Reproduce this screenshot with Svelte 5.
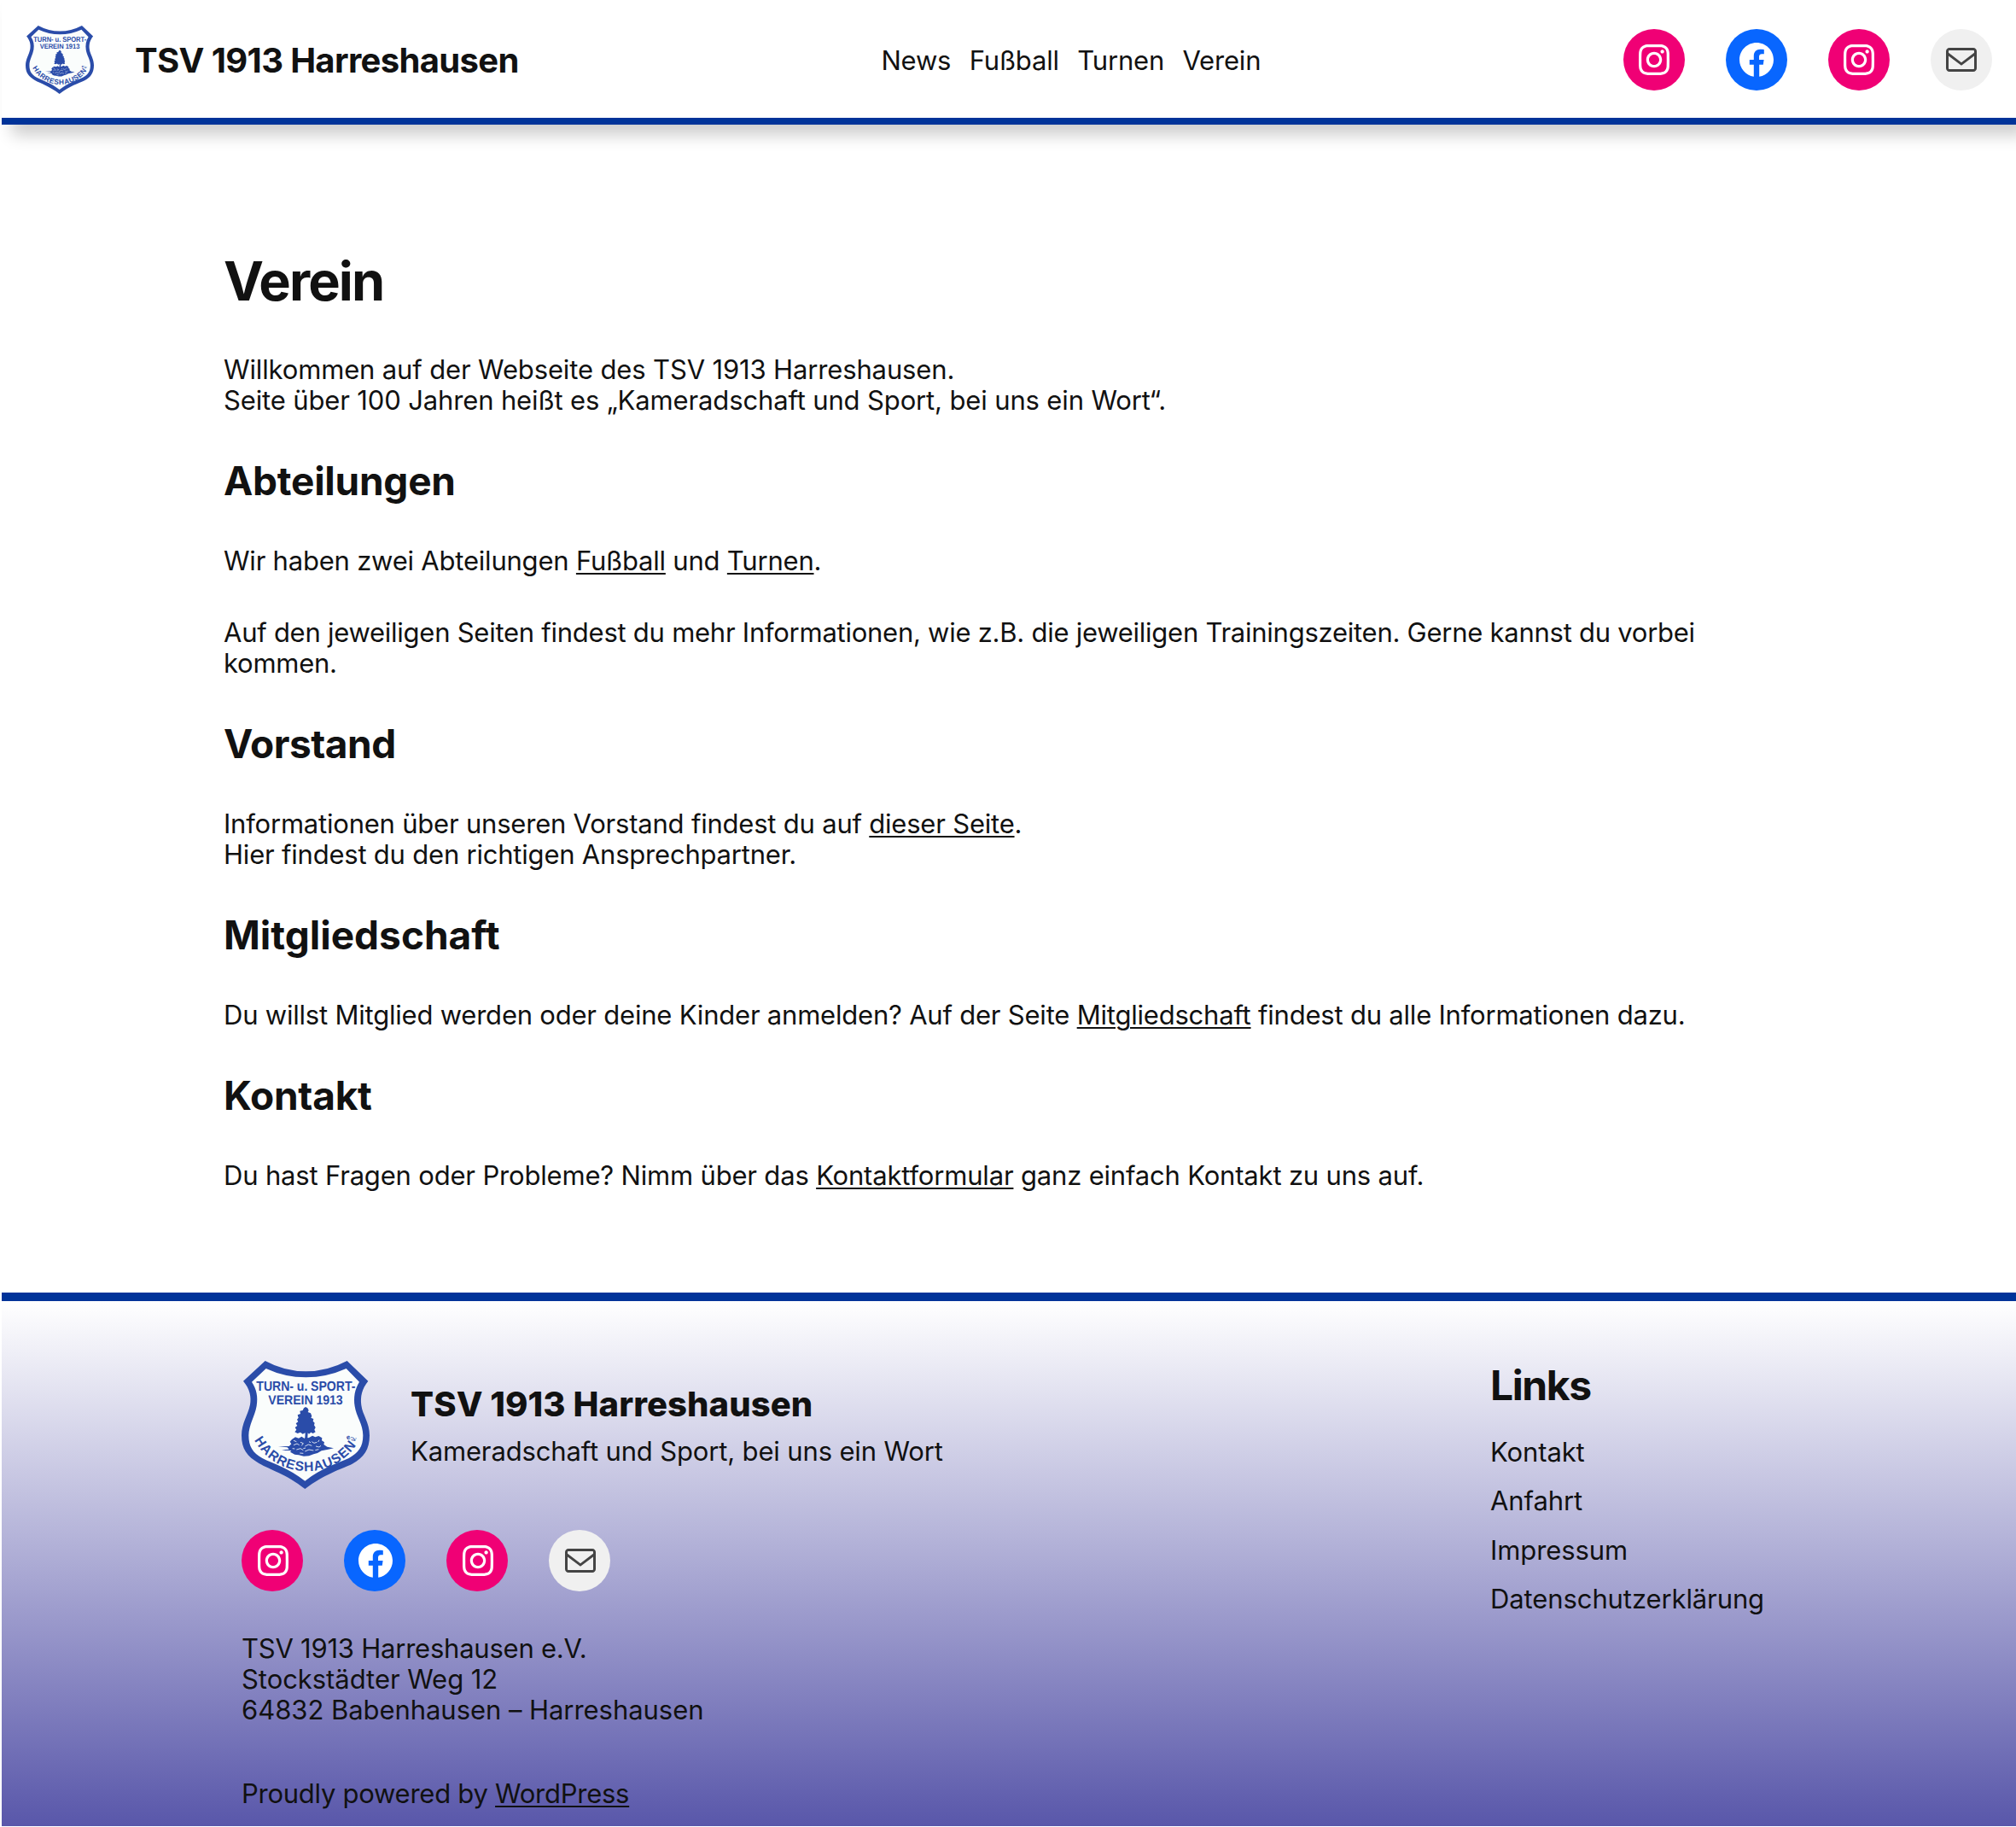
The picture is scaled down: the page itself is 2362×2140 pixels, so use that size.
<script>
  const nav = ['News', 'Fußball', 'Turnen', 'Verein'];
  const footerLinks = ['Kontakt', 'Anfahrt', 'Impressum', 'Datenschutzerklärung'];
  const socials = ['instagram', 'facebook', 'instagram', 'mail'];
</script>

{#snippet logo(id)}
  <svg class="logo" viewBox="39 42 450 450" role="img" aria-label="TSV 1913 Harreshausen">
    <path
      fill="#2a4ca9"
      d="M122 42Q190 79 265 79Q340 79 410 42L484 113C462 140 456 168 460 198C464 232 489 258 489 304C489 352 470 382 428 404C390 422 330 440 262 492C196 440 138 424 100 402C58 378 39 352 39 304C39 262 62 232 69 196C74 168 68 140 45 113Z"
    />
    <path
      fill="#fafdfc"
      d="M125 69Q192 100 265 100Q338 100 407 69L453 116C437 142 432 170 437 202C442 238 466 264 466 304C466 344 450 366 416 384C376 402 322 418 262 464C204 418 150 404 112 384C78 366 64 342 64 304C64 268 86 236 92 200C97 168 92 142 75 116Z"
    />
    <g fill="#2a4ca9" font-family="'Liberation Sans', Arial, sans-serif" font-weight="700" text-rendering="geometricPrecision">
      <text x="91" y="147" font-size="48" textLength="348" lengthAdjust="spacingAndGlyphs">TURN- u. SPORT-</text>
      <text x="133" y="195" font-size="46" textLength="262" lengthAdjust="spacingAndGlyphs">VEREIN 1913</text>
      <path id="arc-{id}" d="M84 320A210 210 0 0 0 447 330" fill="none" />
      <text font-size="47" textLength="428" lengthAdjust="spacing"><textPath href="#arc-{id}">HARRESHAUSEN</textPath></text>
      <text font-size="24" transform="translate(411 320) rotate(-25)">e.</text>
      <text font-size="20" transform="translate(436 328) rotate(-62)">V.</text>
    </g>
    <g fill="#2a4ca9">
      <path
        d="M264 204L271 208L275 216L272 222L282 226L286 236L283 242L292 246L290 254L296 260L294 268L299 276L295 284L299 292L290 297L283 293L276 299L272 295L271 312L277 320L257 320L262 312L263 295L254 299L246 293L236 297L226 292L232 284L227 276L235 270L230 262L238 256L234 248L239 242L236 232L246 228L244 218L254 216L258 208Z"
      />
      <path
        d="M216 318L228 310L240 314L250 308L262 316L276 312L288 305L298 310L310 306L322 313L321 322L330 328L328 336L340 344L363 349L340 354L320 358L306 366L292 370L276 376L258 377L240 373L226 371L210 362L214 357L194 357L180 355L206 353L200 346L168 343L206 342L214 334L209 326Z"
      />
    </g>
    <path
      fill="none"
      stroke="#fafdfc"
      stroke-width="2.5"
      d="M222 338l12-5 8 5M246 328l10 4-6 8M262 342l12-6 12 4M286 326l8 5 10-3M300 342l12 3 6-5M232 354l14-4 10 6M262 360l14-6 16 3M222 322l10 4M298 356l12-3M244 366l12 1M218 350l8 1M276 326l6 3M312 320l-4 7M256 350l8-2"
    />
  </svg>
{/snippet}

{#snippet socialIcons()}
  <div class="socials">
    {#each socials as kind}
      <span class="social {kind}">
        <svg viewBox="0 0 24 24" width="48" height="48" fill="currentColor">
          {#if kind === 'instagram'}
            <path
              d="M12,4.622c2.403,0,2.688,0.009,3.637,0.052c0.877,0.04,1.354,0.187,1.671,0.31c0.42,0.163,0.72,0.358,1.035,0.673c0.315,0.315,0.51,0.615,0.673,1.035c0.123,0.317,0.27,0.794,0.31,1.671c0.043,0.949,0.052,1.234,0.052,3.637s-0.009,2.688-0.052,3.637c-0.04,0.877-0.187,1.354-0.31,1.671c-0.163,0.42-0.358,0.72-0.673,1.035c-0.315,0.315-0.615,0.51-1.035,0.673c-0.317,0.123-0.794,0.27-1.671,0.31c-0.949,0.043-1.233,0.052-3.637,0.052s-2.688-0.009-3.637-0.052c-0.877-0.04-1.354-0.187-1.671-0.31c-0.42-0.163-0.72-0.358-1.035-0.673c-0.315-0.315-0.51-0.615-0.673-1.035c-0.123-0.317-0.27-0.794-0.31-1.671C4.631,14.688,4.622,14.403,4.622,12s0.009-2.688,0.052-3.637c0.04-0.877,0.187-1.354,0.31-1.671c0.163-0.42,0.358-0.72,0.673-1.035c0.315-0.315,0.615-0.51,1.035-0.673c0.317-0.123,0.794-0.27,1.671-0.31C9.312,4.631,9.597,4.622,12,4.622M12,3C9.556,3,9.249,3.01,8.289,3.054C7.331,3.098,6.677,3.25,6.105,3.472C5.513,3.702,5.011,4.01,4.511,4.511c-0.5,0.5-0.808,1.002-1.038,1.594C3.25,6.677,3.098,7.331,3.054,8.289C3.01,9.249,3,9.556,3,12c0,2.444,0.01,2.751,0.054,3.711c0.044,0.958,0.196,1.612,0.418,2.185c0.23,0.592,0.538,1.094,1.038,1.594c0.5,0.5,1.002,0.808,1.594,1.038c0.572,0.222,1.227,0.375,2.185,0.418C9.249,20.99,9.556,21,12,21s2.751-0.01,3.711-0.054c0.958-0.044,1.612-0.196,2.185-0.418c0.592-0.23,1.094-0.538,1.594-1.038c0.5-0.5,0.808-1.002,1.038-1.594c0.222-0.572,0.375-1.227,0.418-2.185C20.99,14.751,21,14.444,21,12s-0.01-2.751-0.054-3.711c-0.044-0.958-0.196-1.612-0.418-2.185c-0.23-0.592-0.538-1.094-1.038-1.594c-0.5-0.5-1.002-0.808-1.594-1.038c-0.572-0.222-1.227-0.375-2.185-0.418C14.751,3.01,14.444,3,12,3L12,3zM12,7.378c-2.552,0-4.622,2.069-4.622,4.622S9.448,16.622,12,16.622s4.622-2.069,4.622-4.622S14.552,7.378,12,7.378zM12,15c-1.657,0-3-1.343-3-3s1.343-3,3-3s3,1.343,3,3S13.657,15,12,15zM16.804,6.116c-0.596,0-1.08,0.484-1.08,1.08s0.484,1.08,1.08,1.08c0.596,0,1.08-0.484,1.08-1.08S17.4,6.116,16.804,6.116z"
            />
          {:else if kind === 'facebook'}
            <path
              d="M12 2C6.5 2 2 6.5 2 12c0 5 3.7 9.1 8.4 9.9v-7H7.9V12h2.5V9.8c0-2.5 1.5-3.9 3.8-3.9 1.1 0 2.2.2 2.2.2v2.5h-1.3c-1.2 0-1.6.8-1.6 1.6V12h2.8l-.4 2.9h-2.3v7C18.3 21.1 22 17 22 12c0-5.5-4.5-10-10-10z"
            />
          {:else}
            <path
              d="M19,5H5c-1.1,0-2,.9-2,2v10c0,1.1.9,2,2,2h14c1.1,0,2-.9,2-2V7c0-1.1-.9-2-2-2zm.5,12c0,.3-.2.5-.5.5H5c-.3,0-.5-.2-.5-.5V9.8l7.5,5.6,7.5-5.6V17zm0-9.1L12,13.6,4.5,7.9V7c0-.3.2-.5.5-.5h14c.3,0,.5.2.5.5v.9z"
            />
          {/if}
        </svg>
      </span>
    {/each}
  </div>
{/snippet}

<div class="page">
  <header>
    <div class="brand">
      {@render logo('top')}
      <span class="site-title">TSV 1913 Harreshausen</span>
    </div>
    <nav>
      {#each nav as item}<span>{item}</span>{/each}
    </nav>
    {@render socialIcons()}
  </header>

  <main>
    <h1>Verein</h1>
    <p class="open">Willkommen auf der Webseite des TSV 1913 Harreshausen.<br />Seite über 100 Jahren heißt es „Kameradschaft und Sport, bei uns ein Wort“.</p>
    <h2>Abteilungen</h2>
    <p>Wir haben zwei Abteilungen <u>Fußball</u> und <u>Turnen</u>.</p>
    <p class="tight">Auf den jeweiligen Seiten findest du mehr Informationen, wie z.B. die jeweiligen Trainingszeiten. Gerne kannst du vorbei<br />kommen.</p>
    <h2 class="narrow">Vorstand</h2>
    <p>Informationen über unseren Vorstand findest du auf <u>dieser Seite</u>.<br />Hier findest du den richtigen Ansprechpartner.</p>
    <h2 class="wide">Mitgliedschaft</h2>
    <p>Du willst Mitglied werden oder deine Kinder anmelden? Auf der Seite <u>Mitgliedschaft</u> findest du alle Informationen dazu.</p>
    <h2>Kontakt</h2>
    <p class="contact">Du hast Fragen oder Probleme? Nimm über das <u>Kontaktformular</u> ganz einfach Kontakt zu uns auf.</p>
  </main>

  <footer>
    <div class="about">
      <div class="brand large">
        {@render logo('bottom')}
        <div class="titles">
          <span class="site-title">TSV 1913 Harreshausen</span>
          <span class="tagline">Kameradschaft und Sport, bei uns ein Wort</span>
        </div>
      </div>
      {@render socialIcons()}
      <address><span class="club">TSV 1913 Harreshausen e.V.</span><br />Stockstädter Weg 12<br />64832 Babenhausen – Harreshausen</address>
      <div class="powered">Proudly powered by <u>WordPress</u></div>
    </div>
    <div class="links">
      <h2>Links</h2>
      <ul>
        {#each footerLinks as item}<li>{item}</li>{/each}
      </ul>
    </div>
  </footer>
</div>

<style>
  :global(body) {
    background: #fff;
  }
  .page {
    margin-left: 2px;
    color: #111;
    font: 400 31px/36px Inter, 'Liberation Sans', sans-serif;
    letter-spacing: -0.21px;
    white-space: nowrap;
  }
  header {
    display: flex;
    align-items: center;
    justify-content: space-between;
    box-sizing: border-box;
    height: 146px;
    padding: 2px 28px 0;
    border-bottom: 8px solid #003399;
    box-shadow: 12px 12px 18px rgba(0, 0, 0, 0.2);
  }
  .brand {
    display: flex;
    align-items: center;
    gap: 48px;
  }
  .logo {
    display: block;
    width: 80px;
    height: 80px;
  }
  .large .logo {
    width: 150px;
    height: 150px;
  }
  .site-title {
    padding-top: 2px;
    font-size: 40px;
    font-weight: 700;
    line-height: 50px;
    letter-spacing: -0.65px;
  }
  nav {
    display: flex;
    gap: 21.4px;
    padding-top: 2px;
    letter-spacing: -0.18px;
  }
  .socials {
    display: flex;
    gap: 48px;
  }
  .social {
    display: flex;
    align-items: center;
    justify-content: center;
    width: 72px;
    height: 72px;
    border-radius: 50%;
    color: #fff;
  }
  .social svg {
    display: block;
  }
  .instagram {
    background: #f00075;
  }
  .facebook {
    background: #0866ff;
  }
  .mail {
    background: #f0f0f0;
    color: #444;
  }
  main {
    display: flex;
    flex-direction: column;
    gap: 48px;
    box-sizing: border-box;
    height: 1368px;
    padding: 146px 260px 0;
  }
  h1,
  h2,
  p,
  ul {
    margin: 0;
    padding: 0;
  }
  h1 {
    margin-bottom: 1px;
    font-size: 63px;
    font-weight: 700;
    line-height: 74px;
    letter-spacing: -1.9px;
  }
  h2 {
    font-size: 46px;
    font-weight: 700;
    line-height: 56px;
    letter-spacing: -0.25px;
  }
  .wide {
    letter-spacing: 0;
  }
  .narrow {
    letter-spacing: -0.5px;
  }
  .open {
    letter-spacing: -0.14px;
  }
  .tight {
    letter-spacing: -0.255px;
  }
  .contact {
    letter-spacing: -0.18px;
  }
  u {
    text-decoration-thickness: 2px;
    text-underline-offset: 3px;
  }
  footer {
    display: flex;
    justify-content: space-between;
    box-sizing: border-box;
    height: 625px;
    padding: 70px 281px 0;
    border-top: 10px solid #003399;
    background: linear-gradient(180deg, #fff 0%, #5957aa 100%);
  }
  .about {
    display: flex;
    flex-direction: column;
    gap: 48px;
  }
  .titles {
    display: flex;
    flex-direction: column;
    gap: 13px;
    letter-spacing: -0.15px;
  }
  .titles .site-title {
    padding-top: 0;
    font-weight: 800;
    line-height: 48px;
    letter-spacing: 0.08px;
  }
  .about .socials svg {
    margin-left: 2px;
  }
  address {
    padding-top: 1px;
    font-style: normal;
    letter-spacing: -0.05px;
  }
  .club {
    letter-spacing: -0.23px;
  }
  .powered {
    margin-top: 13.7px;
    letter-spacing: -0.26px;
  }
  .links {
    width: 335px;
    padding-top: 1px;
    letter-spacing: -0.1px;
  }
  .links h2 {
    font-size: 48px;
    letter-spacing: -1.4px;
  }
  ul {
    display: flex;
    flex-direction: column;
    gap: 21.4px;
    margin-top: 32px;
    list-style: none;
  }
</style>
